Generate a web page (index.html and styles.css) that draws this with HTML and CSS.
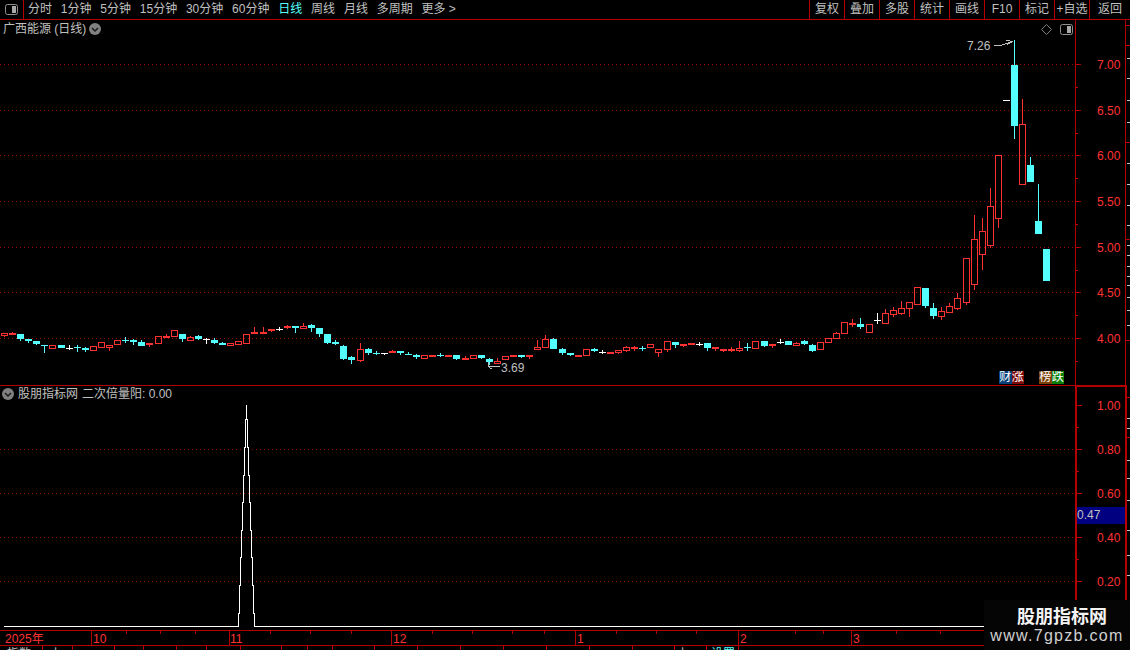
FILE: index.html
```html
<!DOCTYPE html>
<html lang="zh-CN">
<head>
<meta charset="utf-8">
<title>广西能源 日线</title>
<link rel="stylesheet" href="styles.css">
</head>
<body>
<div class="app">
  <header class="toolbar">
    <div class="toolbar-left">
      <div class="layout-cell">
        <svg class="panel-icon" viewBox="0 0 13 11"><rect x="0.5" y="0.5" width="12" height="10" rx="2" class="panel-outline"/><rect x="7" y="2" width="4" height="7" class="panel-fill"/></svg>
      </div>
      <nav class="periods">
        <span>分时</span><span>1分钟</span><span>5分钟</span><span>15分钟</span><span>30分钟</span><span>60分钟</span>
        <span class="active">日线</span><span>周线</span><span>月线</span><span>多周期</span><span>更多 &gt;</span>
      </nav>
    </div>
    <nav class="tools">
      <span>复权</span><span>叠加</span><span>多股</span><span>统计</span><span>画线</span><span>F10</span><span>标记</span><span>+自选</span><span class="tool-last">返回</span>
    </nav>
  </header>

  <section class="pane pane-price">
    <div class="chart">
      <div class="pane-title title-price">
        <span>广西能源 (日线)</span>
        <svg class="chevron" viewBox="0 0 12 12"><circle cx="6" cy="6" r="6" class="chevron-disc"/><path d="M3 5l3 3 3-3" class="chevron-mark"/></svg>
      </div>
      <div class="chart-tools">
        <svg class="diamond" viewBox="0 0 11 11"><path d="M5.5.5l5 5-5 5-5-5z"/></svg>
        <svg class="panel-icon" viewBox="0 0 13 11"><rect x="0.5" y="0.5" width="12" height="10" rx="2" class="panel-outline"/><rect x="7" y="2" width="4" height="7" class="panel-fill"/></svg>
      </div>
      <div class="badges badges-fin"><span class="b-blue">财</span><span class="b-red">涨</span></div>
      <div class="badges badges-rank"><span class="b-brown">榜</span><span class="b-green">跌</span></div>
      <svg id="price-chart" class="plot" viewBox="0 20 1075 365" width="1075" height="365">
        <g class="grid">
          <path d="M0 64.5H1075M0 110.5H1075M0 155.5H1075M0 201.5H1075M0 247.5H1075M0 292.5H1075M0 338.5H1075"/>
        </g>
        <g id="candles"></g>
        <text x="967" y="50" class="note">7.26</text>
        <path class="note-arrow" d="M993.5 45.5H1000.5L1012.5 41.5M1006.5 40.5L1012.5 41.5L1007.5 44.5"/>
        <text x="501" y="372" class="note">3.69</text>
        <path class="note-arrow" d="M500 366.5H488.5V362M488.5 366.5L491.5 369"/>
      </svg>
    </div>
    <svg class="axis" viewBox="1075 20 55 365" width="55" height="365">
      <path class="axis-line" d="M1075.5 20V385M1125.5 20V385"/>
      <path class="axis-line" d="M1076 64.5H1081M1076 87.5H1078M1076 110.5H1081M1076 133.5H1078M1076 155.5H1081M1076 178.5H1078M1076 201.5H1081M1076 224.5H1078M1076 247.5H1081M1076 270.5H1078M1076 292.5H1081M1076 315.5H1078M1076 338.5H1081M1076 361.5H1078"/>
      <path class="axis-line" d="M1126 25.5H1130M1126 45.5H1130M1126 142.5H1130M1126 239.5H1130M1126 340.5H1130"/>
      <path class="ruler-minor" d="M1127 58.5H1130M1127 78.5H1130M1127 100.5H1130M1127 122.5H1130M1127 163.5H1130M1127 184.5H1130M1127 205.5H1130M1127 225.5H1130M1127 245.5H1130M1127 255.5H1130M1127 266.5H1130M1127 276.5H1130M1127 285.5H1130M1127 297.5H1130M1127 310.5H1130M1127 325.5H1130"/>
      <text x="1097" y="69" class="tick-label">7.00</text>
      <text x="1097" y="115" class="tick-label">6.50</text>
      <text x="1097" y="160" class="tick-label">6.00</text>
      <text x="1097" y="206" class="tick-label">5.50</text>
      <text x="1097" y="252" class="tick-label">5.00</text>
      <text x="1097" y="297" class="tick-label">4.50</text>
      <text x="1097" y="343" class="tick-label">4.00</text>
    </svg>
  </section>

  <section class="pane pane-indicator">
    <div class="chart">
      <div class="pane-title title-indicator">
        <svg class="chevron" viewBox="0 0 12 12"><circle cx="6" cy="6" r="6" class="chevron-disc"/><path d="M3 5l3 3 3-3" class="chevron-mark"/></svg>
        <span>股朋指标网</span>
        <span>二次倍量阳: 0.00</span>
      </div>
      <svg class="plot" viewBox="0 385 1075 245" width="1075" height="245">
        <path class="pane-rule" d="M0 385.5H1075"/>
        <g class="grid"><path d="M0 449.5H1075M0 493.5H1075M0 537.5H1075M0 581.5H1075"/></g>
        <path class="spike" d="M4 626.5H238.5V613H239.5V585H240.5V557H241.5V530H242.5V502H243.5V475H244.5V447H245.5V419H246.5V405M246.5 419H247.5V447H248.5V475H249.5V502H250.5V530H251.5V557H252.5V585H253.5V613H254.5V626.5H1075"/>
      </svg>
    </div>
    <svg class="axis" viewBox="1075 385 55 245" width="55" height="245">
      <path class="axis-heavy" d="M1075 386H1127M1076 385V630M1126 385V600"/>
      <path class="axis-line" d="M1077 405.5H1082M1077 427.5H1079M1077 449.5H1082M1077 471.5H1079M1077 493.5H1082M1077 515.5H1079M1077 537.5H1082M1077 559.5H1079M1077 581.5H1082"/>
      <path class="axis-line" d="M1127 397.5H1130M1127 437.5H1130"/>
      <path class="ruler-minor" d="M1127 418.5H1130M1127 428.5H1130M1127 460.5H1130M1127 478.5H1130M1127 500.5H1130M1127 530.5H1130M1127 555.5H1130M1127 575.5H1130"/>
      <text x="1097" y="410" class="tick-label">1.00</text>
      <text x="1097" y="454" class="tick-label">0.80</text>
      <text x="1097" y="498" class="tick-label">0.60</text>
      <text x="1097" y="542" class="tick-label">0.40</text>
      <text x="1097" y="586" class="tick-label">0.20</text>
      <rect x="1077" y="507" width="48" height="17" class="cursor-box"/>
      <text x="1077" y="519" class="cursor-label">0.47</text>
    </svg>
  </section>

  <svg class="date-axis" viewBox="0 630 1130 16" width="1130" height="16">
    <path class="axis-line" d="M0 630.5H1130M0 646V645.5H1130"/>
    <path class="axis-line" d="M91.5 631V646M229.5 631V646M391.5 631V646M575.5 631V646M738.5 631V646M851.5 631V646"/>
    <path class="axis-line" d="M126.5 631V634M160.5 631V634M195.5 631V634M270.5 631V634M310.5 631V634M351.5 631V634M432.5 631V634M472.5 631V634M512.5 631V634M544.5 631V634M616.5 631V634M656.5 631V634M696.5 631V634M795.5 631V634M823.5 631V634M896.5 631V634M940.5 631V634"/>
    <text x="5" y="643" class="tick-label">2025年</text>
    <text x="93" y="643" class="tick-label">10</text>
    <text x="230" y="643" class="tick-label">11</text>
    <text x="393" y="643" class="tick-label">12</text>
    <text x="577" y="643" class="tick-label">1</text>
    <text x="740" y="643" class="tick-label">2</text>
    <text x="853" y="643" class="tick-label">3</text>
  </svg>

  <footer class="status">
    <span>指数</span><span>上</span><span></span><span></span><span></span><span></span><span></span><span></span><span></span><span></span>
    <span></span><span></span><span></span><span></span><span></span><span></span><span></span><span></span><span class="status-mark">上</span><span class="status-active">设置</span><span></span>
  </footer>

  <aside class="watermark">
    <strong>股朋指标网</strong>
    <span>www.7gpzb.com</span>
  </aside>
</div>
<script src="chart.js"></script>
</body>
</html>
```

FILE: styles.css
```css
* { box-sizing: border-box; }

html, body {
  margin: 0;
  height: 650px;
  overflow: hidden;
  background: #000;
}

body {
  font-family: "Liberation Sans", "Noto Sans CJK SC", sans-serif;
  font-size: 12px;
  color: #c0c0c0;
}

.app {
  position: relative;
  display: flex;
  flex-direction: column;
  width: 1130px;
  height: 650px;
  overflow: hidden;
}

/* toolbar */
.toolbar {
  display: flex;
  justify-content: space-between;
  flex: 0 0 20px;
  border-bottom: 1px solid #b40000;
}

.toolbar-left { display: flex; }

.layout-cell {
  display: flex;
  align-items: center;
  justify-content: center;
  width: 24px;
  padding-right: 1px;
  border-right: 1px solid #b40000;
}

.panel-icon { width: 13px; height: 11px; }
.panel-outline { fill: none; stroke: #909090; }
.panel-fill { fill: #a8a8a8; }

.periods {
  display: flex;
  align-items: center;
  gap: 8.8px;
  padding-left: 4px;
  line-height: 19px;
}

.periods .active { color: #54ffff; }

.tools { display: flex; }

.tools span {
  width: 35px;
  border-left: 1px solid #b40000;
  line-height: 19px;
  text-align: center;
  white-space: nowrap;
}

.tools .tool-last { width: 41px; }

/* panes */
.pane { display: flex; }
.pane-price { flex: 0 0 365px; }
.pane-indicator { flex: 0 0 245px; }

.chart {
  position: relative;
  flex: 0 0 1075px;
}

.plot { display: block; shape-rendering: crispEdges; }
.axis { display: block; flex: 0 0 55px; shape-rendering: crispEdges; }

.grid { shape-rendering: geometricPrecision; }
.grid path { fill: none; stroke: #a00000; stroke-dasharray: 1 3; }
.pane-rule { stroke: #b40000; fill: none; }
.spike { fill: none; stroke: #fff; }

.axis-line { fill: none; stroke: #b40000; }
.axis-heavy { fill: none; stroke: #b40000; stroke-width: 2; }
.ruler-minor { fill: none; stroke: #c8c8c8; }

.tick-label {
  fill: #ff3232;
  font-size: 12px;
  shape-rendering: auto;
}

.cursor-box { fill: #000080; }
.cursor-label { fill: #c0c0c0; font-size: 12px; }

.note { fill: #c0c0c0; font-size: 12px; }
.note-arrow { fill: none; stroke: #c0c0c0; }

.candle-red { fill: none; stroke: #ff3232; }
.candle-cyan { fill: #54ffff; }
.wick-red { fill: none; stroke: #ff3232; }
.wick-cyan { fill: none; stroke: #54ffff; }
.wick-white { fill: none; stroke: #fff; }

/* overlays on the charts */
.pane-title {
  position: absolute;
  display: flex;
  align-items: center;
  line-height: 18px;
  white-space: nowrap;
}

.title-price { left: 3px; top: 0; gap: 3px; }
.title-indicator { left: 2px; top: 0; gap: 4px; }

.chevron { width: 12px; height: 12px; }
.chevron-disc { fill: #808080; }
.chevron-mark { fill: none; stroke: #1a1a1a; stroke-width: 1.5; }

.chart-tools {
  position: absolute;
  top: 4px;
  right: 2px;
  display: flex;
  align-items: center;
  gap: 8px;
}

.diamond { width: 11px; height: 11px; }
.diamond path { fill: none; stroke: #808080; }

.badges {
  position: absolute;
  top: 351px;
  display: flex;
  color: #fff;
  line-height: 13px;
}

.badges span { display: block; width: 12.5px; height: 13px; overflow: hidden; text-align: center; }
.badges-fin { left: 999px; }
.badges-rank { left: 1039px; }
.b-blue { background: #063f78; }
.b-red { background: #7f0a0a; }
.b-brown { background: #7a4208; }
.b-green { background: #0a800a; }

/* date axis and status */
.date-axis { display: block; flex: 0 0 16px; shape-rendering: crispEdges; }

.status {
  display: grid;
  grid-template-columns: 43px 30px 42px 29px 33px 30px 34px 41px 26px 25px 42px 43px 43px 43px 43px 43px 43px 42px 32px 32px 1fr;
  flex: 0 0 4px;
  overflow: hidden;
  line-height: 16px;
}

.status span {
  height: 4px;
  padding: 0 0 0 7px;
  border-right: 1px solid #b40000;
}

.status .status-active { color: #54ffff; padding-left: 4px; }
.status .status-mark { padding-left: 2px; }

.watermark {
  position: absolute;
  right: 0;
  bottom: 0;
  display: flex;
  flex-direction: column;
  align-items: center;
  width: 146px;
  height: 50px;
  padding-top: 3px;
  background: #050505;
  color: #e8e8e8;
}

.watermark strong {
  margin-left: 10px;
  font-family: "Noto Sans CJK SC", sans-serif;
  font-size: 18px;
  line-height: 24px;
  color: #f4f4f4;
}

.watermark span {
  font-size: 16px;
  line-height: 17px;
  letter-spacing: 1.3px;
  color: #d0d0d0;
}
```

FILE: chart.js
```js
// Each candle: colour, body top, body bottom, wick top, wick bottom (page pixels).
// Colour: r = rising (hollow), c = falling (filled), w = unchanged (cross), d = dash only.
var z = function (base, list) {
  return list.map(function (c) {
    return {
      t: c[0],
      top: base + c[1] / 3,
      bot: base + c[2] / 3,
      hi: c[3] ? base + c[3] / 3 : null,
      lo: c[4] ? base + c[4] / 3 : null
    };
  });
};

var candles = [].concat(
  z(320, [
    ['r',40,47,0,50],['r',38,45,36,0],['c',41,57,0,63],['c',57,64,0,69],['c',63,72,0,76],
    ['c',75,77,0,99],['r',76,86],['c',75,83],['w',83,83,76,90],['c',81,83,74,95],
    ['c',84,91,81,95],['r',79,92],['r',67,83],['r',76,83,0,94],['r',61,74],
    ['c',59,61,51,69],['c',59,66,56,74],['c',67,77,60,0],['r',70,75,0,80],['r',49,71],
    ['r',48,55,42,0],['r',31,50],['c',43,58,0,65],['r',52,62,49,0],['c',48,56,44,60],
    ['w',56,56,54,72],['c',60,69,55,72],['c',69,74,66,0],['r',70,77],['r',64,74],
    ['r',43,71],['r',37,41,22,0],['r',37,41,22,0],['r',26,33,0,36],['w',26,26,21,33],
    ['r',18,22,15,26],['c',18,23,0,38],['r',18,26,10,0],['c',15,23,12,36],['c',24,42,0,50],
    ['c',42,68,0,71],['c',66,72,60,75],['c',78,117,75,120],['c',111,120,108,132],['r',88,122,70,126],
    ['c',87,98,84,105],['c',98,101,93,105],['w',100,100,0,105],['r',94,98,90,0],['c',94,99,0,105],
    ['c',101,103,96,0],['c',105,110,101,117],['r',106,116],['r',105,109],['c',104,107,99,111],
    ['r',105,109],['c',105,116,0,120],['r',114,118,108,0],['r',106,118],['c',105,113,0,117],
    ['c',117,125,113,135],['r',124,131,114,0],['r',109,121],['r',106,110],['c',105,110,0,113],
    ['r',106,110,0,117],['r',82,89,60,0],['r',58,83,45,0],['c',58,86,55,0],['c',87,98,84,105],
    ['c',99,104,0,107],['r',105,109]
  ]),
  z(310, [
    ['r',118,137],['c',117,122,113,126],['w',126,126,120,132],['r',126,130,0,133],['r',121,128,0,131],
    ['r',112,122,108,125],['r',112,116,108,122],['c',114,116,108,122],['r',103,113],['r',118,128,0,140],
    ['r',94,119,0,125],['c',97,105,0,113],['r',102,107,0,111],['r',100,104],['w',101,101,95,108],
    ['c',100,114,0,122],['r',112,118,0,122],['r',118,122,0,125],['r',118,122,111,126],['r',115,122,93,126],
    ['c',110,112,99,122],['r',94,116],['c',94,108,0,111],['r',103,109,0,113],['w',95,95,87,102],
    ['c',94,105],['r',100,107,97,0],['c',94,102,90,105],['c',105,122,102,126],['r',97,119],
    ['r',85,98],['r',70,86,66,0],['r',37,71],['r',40,45,27,51],['c',42,51,24,57],
    ['r',43,68],['w',30,30,9,42]
  ]),
  z(130, [
    ['r',550,581,538,0],['r',541,554,531,560],['r',535,551,514,555],['r',517,536,0,560],['r',472,524],
    ['c',474,528,0,534],['c',534,558,519,567],['r',544,560,532,570],['r',529,548,520,0],['r',505,536,488,541],
    ['r',385,518,0,525],['r',328,464,255,480],['r',304,374,264,420],['r',229,347,174,355],['r',76,266,0,294]
  ]),
  [
    { t: 'd', top: 100, bot: 100 },
    { t: 'c', top: 65, bot: 126, hi: 40, lo: 139 },
    { t: 'r', top: 124, bot: 185, hi: 99, lo: null },
    { t: 'c', top: 165, bot: 182, hi: 157, lo: null },
    { t: 'c', top: 221, bot: 234, hi: 184, lo: null },
    { t: 'c', top: 249, bot: 281, hi: null, lo: null }
  ]
);

var NS = 'http://www.w3.org/2000/svg';
var host = document.getElementById('candles');

function add(tag, cls, attrs) {
  var el = document.createElementNS(NS, tag);
  el.setAttribute('class', cls);
  Object.keys(attrs).forEach(function (k) { el.setAttribute(k, attrs[k]); });
  host.appendChild(el);
}

candles.forEach(function (c, i) {
  var cx = Math.round(4 + i * 8.08);
  var top = Math.round(c.top);
  var bot = Math.round(c.bot);
  var wickClass = c.t === 'r' ? 'wick-red' : c.t === 'c' ? 'wick-cyan' : 'wick-white';
  var d = '';
  if (c.hi !== null && c.hi !== undefined) d += 'M' + (cx + 0.5) + ' ' + Math.round(c.hi) + 'V' + top;
  if (c.lo !== null && c.lo !== undefined) d += 'M' + (cx + 0.5) + ' ' + bot + 'V' + Math.round(c.lo);
  if (d) add('path', wickClass, { d: d });

  if (c.t === 'r') {
    add('rect', 'candle-red', { x: cx - 2.5, y: top + 0.5, width: 6, height: Math.max(bot - top - 1, 1) });
  } else if (c.t === 'c') {
    add('rect', 'candle-cyan', { x: cx - 3, y: top, width: 7, height: Math.max(bot - top, 1) });
  } else {
    add('path', 'wick-white', { d: 'M' + (cx - 3) + ' ' + (top + 0.5) + 'H' + (cx + 4) });
  }
});
```
